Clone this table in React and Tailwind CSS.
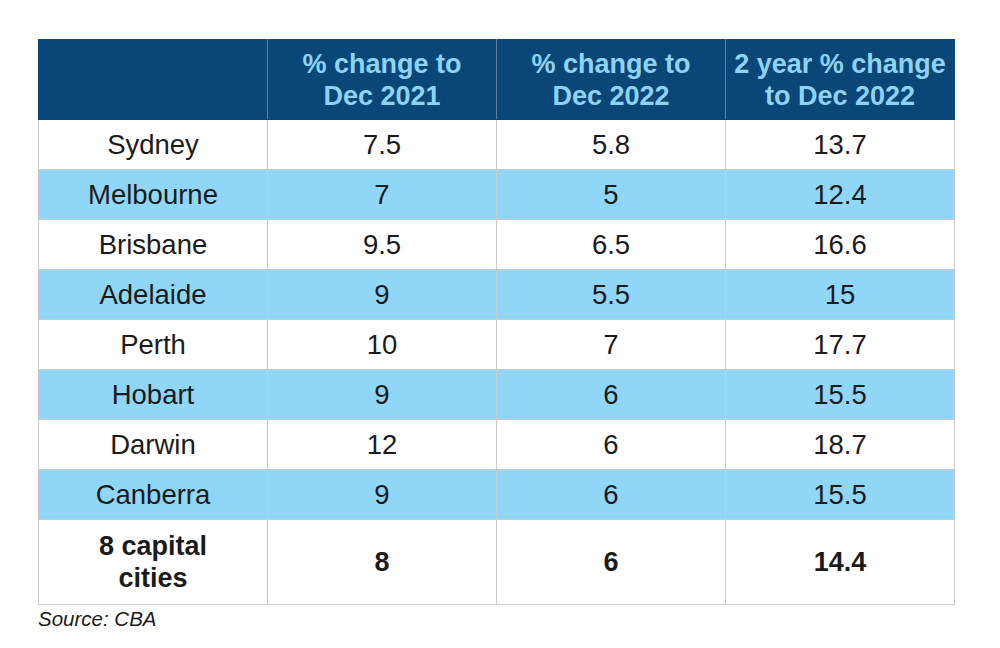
const rows = [
  ["Sydney", "7.5", "5.8", "13.7"],
  ["Melbourne", "7", "5", "12.4"],
  ["Brisbane", "9.5", "6.5", "16.6"],
  ["Adelaide", "9", "5.5", "15"],
  ["Perth", "10", "7", "17.7"],
  ["Hobart", "9", "6", "15.5"],
  ["Darwin", "12", "6", "18.7"],
  ["Canberra", "9", "6", "15.5"],
];

export default function App() {
  return (
    <div className="w-[1000px] h-[648px] bg-white pl-[38px] pt-[39px] font-['Liberation_Sans',Arial,sans-serif]">
      <table className="border-collapse table-fixed w-[916px] text-[#1b1b1b]">
        <thead>
          <tr className="bg-[#0b4776] h-[80px] text-[#8fd3f4] text-[27px] leading-[32px] font-bold">
            <th className="w-[229px] border border-[#0b4776] border-r-[#5d7fa0]"></th>
            <th className="w-[229px] border border-[#0b4776] border-r-[#5d7fa0] font-bold">% change to<br />Dec 2021</th>
            <th className="w-[229px] border border-[#0b4776] border-r-[#5d7fa0] font-bold">% change to<br />Dec 2022</th>
            <th className="w-[229px] border border-[#0b4776] font-bold">2 year % change<br />to Dec 2022</th>
          </tr>
        </thead>
        <tbody>
          {rows.map((r, i) => (
            <tr key={r[0]} className={`h-[50px] text-[27.5px] leading-[32px] ${i % 2 ? "bg-[#8fd6f7]" : "bg-white"}`}>
              {r.map((c, j) => (
                <td key={j} className="border border-[#c8cacc] text-center">{c}</td>
              ))}
            </tr>
          ))}
          <tr className="h-[85px] text-[27px] leading-[32px] font-bold bg-white">
            <td className="border border-[#c8cacc] text-center">8 capital<br />cities</td>
            <td className="border border-[#c8cacc] text-center">8</td>
            <td className="border border-[#c8cacc] text-center">6</td>
            <td className="border border-[#c8cacc] text-center">14.4</td>
          </tr>
        </tbody>
      </table>
      <p className="mt-0 text-[20.5px] leading-[28px] italic text-[#1b1b1b]">Source: CBA</p>
    </div>
  );
}
